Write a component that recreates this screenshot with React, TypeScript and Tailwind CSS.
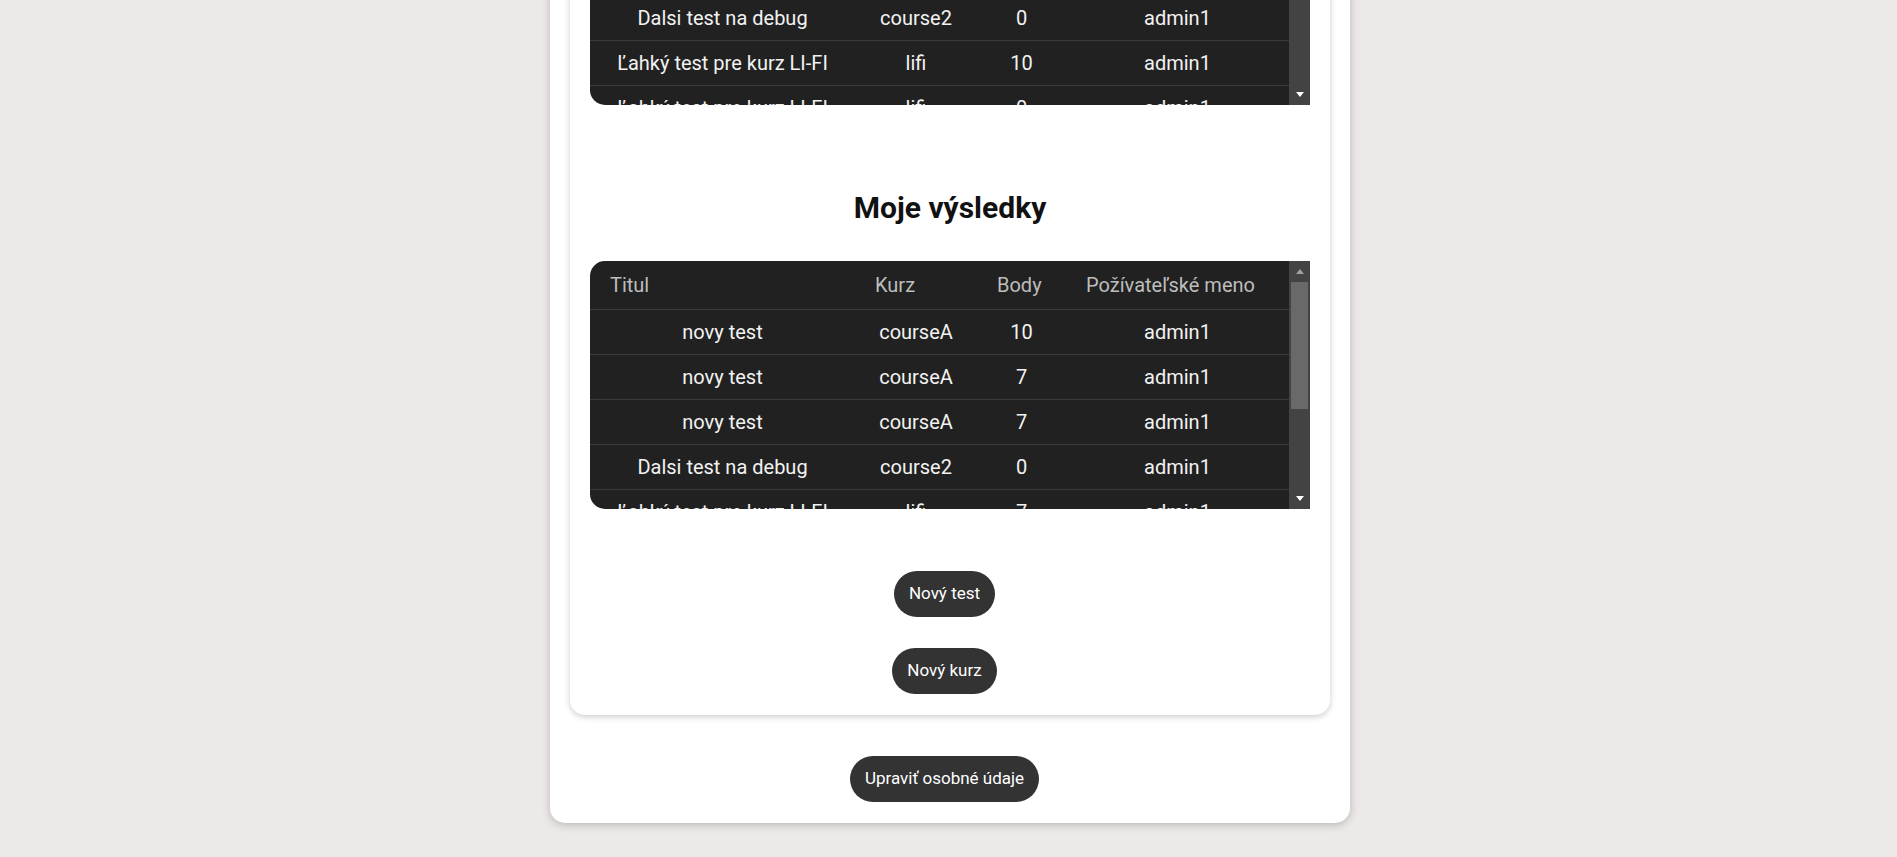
const headers = ["Titul", "Kurz", "Body", "Požívateľské meno"];

const myTests = [
  ["novy test", "courseA", "10", "admin1"],
  ["novy test", "courseA", "7", "admin1"],
  ["Dalsi test na debug", "course2", "0", "admin1"],
  ["Ľahký test pre kurz LI-FI", "lifi", "10", "admin1"],
  ["Ľahký test pre kurz LI-FI", "lifi", "0", "admin1"],
];

const myResults = [
  ["novy test", "courseA", "10", "admin1"],
  ["novy test", "courseA", "7", "admin1"],
  ["novy test", "courseA", "7", "admin1"],
  ["Dalsi test na debug", "course2", "0", "admin1"],
  ["Ľahký test pre kurz LI-FI", "lifi", "7", "admin1"],
];

const cols = "grid grid-cols-[265px_122px_89px_1fr]";

const ScoreTable = ({ rows, thumb }: { rows: string[][]; thumb: boolean }) => {
  return (
    <div className="flex h-[248px] w-[720px] overflow-hidden rounded-l-[15px] bg-[#212121]">
      <div className="flex-1 overflow-hidden">
        <div className={`${cols} h-[49px] items-center border-b border-[#3b3b3b] text-[#bdbdbd]`}>
          {headers.map((h) => (
            <div key={h} className="whitespace-nowrap px-5 text-left">
              {h}
            </div>
          ))}
        </div>
        {rows.map((r, i) => (
          <div
            key={i}
            className={`${cols} h-[45px] shrink-0 items-center border-b border-[#3b3b3b] text-[#f2f2f2]`}
          >
            {r.map((c, j) => (
              <div key={j} className="whitespace-nowrap text-center">
                {c}
              </div>
            ))}
          </div>
        ))}
      </div>
      <div className="flex w-[21px] flex-col items-center bg-[#434343]">
        <div className="flex h-[21px] items-center justify-center">
          <div className="h-0 w-0 border-x-[4px] border-b-[5px] border-x-transparent border-b-[#a0a0a0]" />
        </div>
        {thumb && <div className="h-[127px] w-[17px] bg-[#696969]" />}
        <div className="flex-1" />
        <div className="flex h-[22px] items-center justify-center">
          <div className="h-0 w-0 border-x-[4px] border-t-[5px] border-x-transparent border-t-white" />
        </div>
      </div>
    </div>
  );
};

const DarkButton = ({ children }: { children: string }) => (
  <button className="h-[46px] whitespace-nowrap rounded-full bg-[#333333] px-[15px] text-[17px] text-white">
    {children}
  </button>
);

export default function App() {
  return (
    <div className="h-screen overflow-hidden bg-[#ede9e8] pl-[3px] font-['Roboto',sans-serif] text-[20px]">
      <div className="mx-auto -mt-[183px] w-[800px] rounded-[15px] bg-white px-5 pb-[21px] pt-5 shadow-[0_2px_8px_rgba(0,0,0,0.22)]">
        <div className="rounded-[15px] bg-white px-5 pb-[21px] pt-5 shadow-[0_2px_6px_rgba(0,0,0,0.2)]">
          <ScoreTable rows={myTests} thumb={false} />

          <h2 className="mb-[35px] mt-[85px] text-center text-[30px] font-bold leading-[36px] text-[#111]">
            Moje výsledky
          </h2>

          <ScoreTable rows={myResults} thumb />

          <div className="mt-[62px] flex flex-col items-center gap-[31px] pr-[11px]">
            <DarkButton>Nový test</DarkButton>
            <DarkButton>Nový kurz</DarkButton>
          </div>
        </div>

        <div className="mt-[41px] flex justify-center pr-[11px]">
          <DarkButton>Upraviť osobné údaje</DarkButton>
        </div>
      </div>
    </div>
  );
}
